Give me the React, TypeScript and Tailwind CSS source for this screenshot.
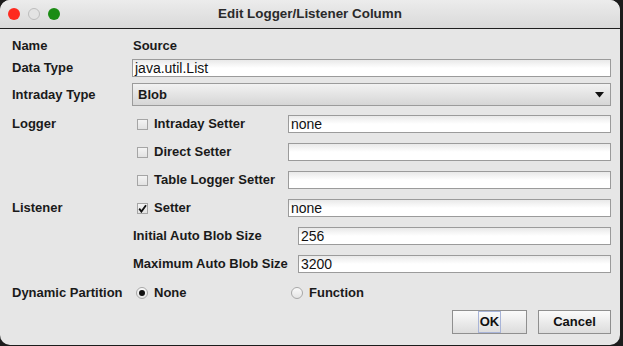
import type { ReactNode } from 'react';

const font = { fontFamily: '"Liberation Sans", Arial, sans-serif' };

function Label({ children, className = '' }: { children: ReactNode; className?: string }) {
  return <span className={`text-[13px] font-bold text-[#1a1a1a] whitespace-nowrap ${className}`}>{children}</span>;
}

function Field({ value = '', className = '' }: { value?: string; className?: string }) {
  return (
    <div
      className={`h-[18px] border border-[#9b9b9b] bg-gradient-to-b from-[#e9e9e9] via-white to-white flex items-center pl-[2px] text-[14px] text-[#111] ${className}`}
    >
      {value}
    </div>
  );
}

function Check({ checked = false, label }: { checked?: boolean; label: string }) {
  return (
    <div className="flex items-center gap-[6px] w-[150px] pl-[5px]">
      <span className="w-[11px] h-[11px] border border-[#a5a5a5] bg-gradient-to-b from-[#f4f4f4] to-[#e2e2e2] flex items-center justify-center">
        {checked && (
          <svg width="9" height="9" viewBox="0 0 9 9">
            <path d="M1.2 4.6 L3.4 7.6 L8 1.2" stroke="#111" strokeWidth="1.8" fill="none" />
          </svg>
        )}
      </span>
      <Label>{label}</Label>
    </div>
  );
}

function Radio({ selected = false, label }: { selected?: boolean; label: string }) {
  return (
    <div className="flex items-center gap-[6px]">
      <span className="w-[12px] h-[12px] rounded-full border border-[#a8a8a8] bg-gradient-to-b from-[#fafafa] to-[#e4e4e4] flex items-center justify-center">
        {selected && <span className="w-[6px] h-[6px] rounded-full bg-[#111]" />}
      </span>
      <Label>{label}</Label>
    </div>
  );
}

function Button({ children, focused = false }: { children: ReactNode; focused?: boolean }) {
  return (
    <div className="h-[24px] border border-[#8f8f8f] bg-gradient-to-b from-[#fbfbfb] to-[#dcdcdc] flex items-center justify-center">
      <span className={`text-[13px] font-bold text-[#111] px-[1px] ${focused ? 'outline outline-1 outline-[#a8b4d8]' : ''}`}>
        {children}
      </span>
    </div>
  );
}

export default function App() {
  return (
    <div className="w-[623px] h-[346px] bg-[#1c1c1c] overflow-hidden" style={font}>
      <div className="w-[620px] h-[345px] bg-[#e6e6e6] rounded-[10px] overflow-hidden flex flex-col">
        {/* title bar */}
        <div className="h-[29px] shrink-0 bg-gradient-to-b from-[#ececec] to-[#d9d9d9] border-b border-[#1e1e1e] flex items-center relative">
          <div className="flex items-center gap-[8px] pl-[8px]">
            <span className="w-[12px] h-[12px] rounded-full bg-[#fe2a1f]" />
            <span className="w-[12px] h-[12px] rounded-full border border-[#bcbcbc] bg-[#e3e3e3]" />
            <span className="w-[12px] h-[12px] rounded-full bg-[#1b8c14]" />
          </div>
          <div className="absolute inset-0 flex items-center justify-center text-[13.4px] font-bold text-[#2a2a2a]">
            Edit Logger/Listener Column
          </div>
        </div>

        <div className="pl-[12px] pr-[9px] flex flex-col">
          <div className="h-[18px] mt-[8px] flex items-center">
            <Label className="w-[121px]">Name</Label>
            <Label>Source</Label>
          </div>
          <div className="h-[18px] mt-[4px] flex items-center">
            <Label className="w-[120px]">Data Type</Label>
            <Field value="java.util.List" className="flex-1" />
          </div>
          <div className="h-[23px] mt-[6px] flex items-center">
            <Label className="w-[120px]">Intraday Type</Label>
            <div className="flex-1 h-[23px] border border-[#9b9b9b] bg-gradient-to-b from-[#f2f2f2] to-[#d6d6d6] flex items-center justify-between pl-[5px] pr-[6px]">
              <Label>Blob</Label>
              <svg width="9" height="6" viewBox="0 0 9 6">
                <path d="M0 0 H9 L4.5 5.5 Z" fill="#111" />
              </svg>
            </div>
          </div>
          <div className="h-[18px] mt-[9px] flex items-center">
            <Label className="w-[120px]">Logger</Label>
            <Check label="Intraday Setter" />
            <Field value="none" className="flex-1 ml-[6px]" />
          </div>
          <div className="h-[18px] mt-[10px] flex items-center">
            <span className="w-[120px]" />
            <Check label="Direct Setter" />
            <Field className="flex-1 ml-[6px]" />
          </div>
          <div className="h-[18px] mt-[10px] flex items-center">
            <span className="w-[120px]" />
            <Check label="Table Logger Setter" />
            <Field className="flex-1 ml-[6px]" />
          </div>
          <div className="h-[18px] mt-[10px] flex items-center">
            <Label className="w-[120px]">Listener</Label>
            <Check checked label="Setter" />
            <Field value="none" className="flex-1 ml-[6px]" />
          </div>
          <div className="h-[18px] mt-[10px] flex items-center">
            <span className="w-[121px]" />
            <Label className="w-[165px]">Initial Auto Blob Size</Label>
            <Field value="256" className="flex-1" />
          </div>
          <div className="h-[18px] mt-[10px] flex items-center">
            <span className="w-[121px]" />
            <Label className="w-[165px]">Maximum Auto Blob Size</Label>
            <Field value="3200" className="flex-1" />
          </div>
          <div className="h-[18px] mt-[11px] flex items-center">
            <Label className="w-[124px]">Dynamic Partition</Label>
            <div className="w-[155px]">
              <Radio selected label="None" />
            </div>
            <Radio label="Function" />
          </div>
          <div className="mt-[8px] flex justify-end gap-[11px]">
            <div className="w-[75px]">
              <Button focused>OK</Button>
            </div>
            <div className="w-[73px]">
              <Button>Cancel</Button>
            </div>
          </div>
        </div>
      </div>
    </div>
  );
}
